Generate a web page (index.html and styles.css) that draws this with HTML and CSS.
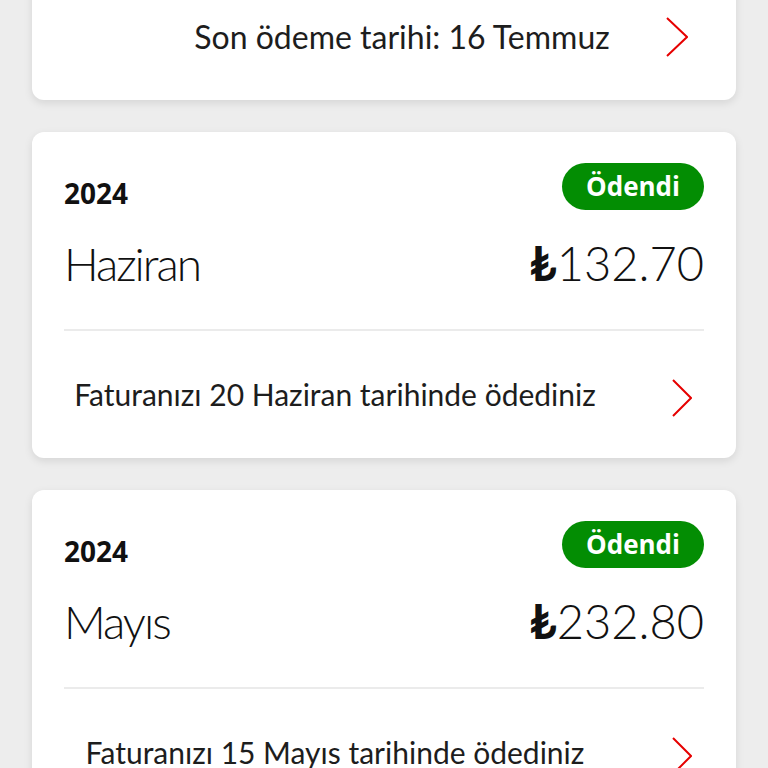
FILE: index.html
```html
<!DOCTYPE html>
<html lang="tr">
<head>
    <meta charset="UTF-8">
    <meta name="viewport" content="width=device-width, initial-scale=1.0">
    <title>Faturalarım</title>
    <link rel="stylesheet" href="styles.css">
</head>
<body>

    <div class="bill-list">
        <!-- Current bill, scrolled partly out of view -->
        <div class="card card-current">
            <div class="card-foot foot-wide">
                <span class="foot-text">Son ödeme tarihi: 16 Temmuz</span>
                <svg class="chevron chevron-lg" viewBox="0 0 22 40"><polyline points="1,1 21,20 1,39"/></svg>
            </div>
        </div>

        <div class="card">
            <div class="card-body">
                <div class="card-head">
                    <span class="year">2024</span>
                    <span class="badge">Ödendi</span>
                </div>
                <div class="card-main">
                    <span class="month">Haziran</span>
                    <span class="amount"><span class="lira">₺</span>132.70</span>
                </div>
            </div>
            <div class="card-foot">
                <span class="foot-text">Faturanızı 20 Haziran tarihinde ödediniz</span>
                <svg class="chevron" viewBox="0 0 20 38"><polyline points="1,1 19,19 1,37"/></svg>
            </div>
        </div>

        <div class="card">
            <div class="card-body">
                <div class="card-head">
                    <span class="year">2024</span>
                    <span class="badge">Ödendi</span>
                </div>
                <div class="card-main">
                    <span class="month">Mayıs</span>
                    <span class="amount"><span class="lira">₺</span>232.80</span>
                </div>
            </div>
            <div class="card-foot">
                <span class="foot-text">Faturanızı 15 Mayıs tarihinde ödediniz</span>
                <svg class="chevron" viewBox="0 0 20 38"><polyline points="1,1 19,19 1,37"/></svg>
            </div>
        </div>
    </div>

</body>
</html>
```

FILE: styles.css
```css
body, html {
    margin: 0;
    background-color: #ededed;
    font-family: Lato, "Liberation Sans", Arial, sans-serif;
    color: #1d1d1d;
    overflow: hidden;
}

/* List of bill cards */
.bill-list {
    display: flex;
    flex-direction: column;
    gap: 32px;
    padding: 0 32px;
}

.card {
    background-color: #ffffff;
    border-radius: 12px;
    box-shadow: 0 3px 8px rgba(0, 0, 0, 0.10);
}

.card-current {
    margin-top: -26px;
}

/* Top part: year, status, month and amount */
.card-body {
    padding: 31px 32px 0;
}

.card-head {
    display: flex;
    justify-content: space-between;
    align-items: flex-start;
}

.year {
    margin-top: 13px;
    font-family: "Open Sans", sans-serif;
    font-size: 28px;
    font-weight: 700;
    line-height: 34px;
    color: #111111;
}

.badge {
    height: 47px;
    padding: 0 24px;
    border-radius: 24px;
    background-color: #038d03;
    color: #ffffff;
    font-family: "Open Sans", sans-serif;
    font-size: 26px;
    font-weight: 700;
    line-height: 46px;
    box-sizing: border-box;
}

.card-main {
    display: flex;
    justify-content: space-between;
    align-items: baseline;
    margin-top: 30px;
    padding-bottom: 42px;
    border-bottom: 2px solid #ebebeb;
}

.month,
.amount {
    font-size: 46px;
    font-weight: 300;
    line-height: 46px;
    color: #111111;
}

.month {
    letter-spacing: -2px;
}

.amount {
    font-size: 47px;
}

.lira {
    font-weight: 700;
}

/* Bottom link row */
.card-foot {
    display: flex;
    align-items: flex-start;
    padding: 43px 44px 41px 32px;
}

.foot-wide {
    padding: 43px 48px 43px 160px;
}

.foot-text {
    flex: 1;
    min-width: 0;
    text-align: center;
    font-size: 30px;
    line-height: 40px;
    white-space: nowrap;
}

.foot-wide .foot-text {
    font-size: 32px;
}

.chevron {
    flex-shrink: 0;
    width: 20px;
    height: 38px;
    margin-top: 5px;
    margin-left: 66px;
    fill: none;
    stroke: #e60000;
    stroke-width: 2;
}

.chevron-lg {
    width: 22px;
    height: 40px;
    margin-top: 0;
    margin-left: 54px;
}
```
